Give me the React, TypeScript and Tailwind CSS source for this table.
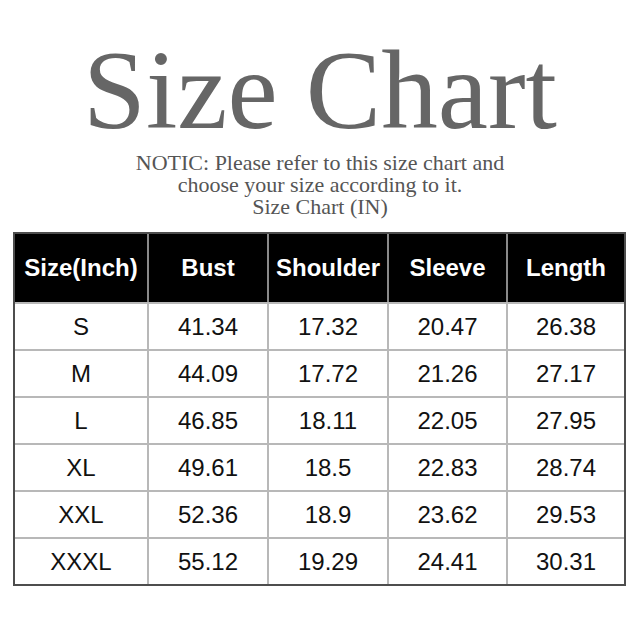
import React from "react";

const headers = ["Size(Inch)", "Bust", "Shoulder", "Sleeve", "Length"];
const rows = [
  ["S", "41.34", "17.32", "20.47", "26.38"],
  ["M", "44.09", "17.72", "21.26", "27.17"],
  ["L", "46.85", "18.11", "22.05", "27.95"],
  ["XL", "49.61", "18.5", "22.83", "28.74"],
  ["XXL", "52.36", "18.9", "23.62", "29.53"],
  ["XXXL", "55.12", "19.29", "24.41", "30.31"],
];

const cols = "grid grid-cols-[132px_120px_120px_119px_118px]";

export default function App() {
  return (
    <div className="w-[640px] h-[640px] bg-white overflow-hidden">
      <div
        className="pt-[33px] text-center text-[113px] leading-[113px] text-[#666666]"
        style={{ fontFamily: '"Liberation Serif", serif' }}
      >
        Size Chart
      </div>
      <div
        className="mt-[6px] text-center text-[22px] leading-[22px] text-[#555555]"
        style={{ fontFamily: '"Liberation Serif", serif' }}
      >
        <div>NOTIC: Please refer to this size chart and</div>
        <div>choose your size according to it.</div>
        <div>Size Chart (IN)</div>
      </div>
      <div
        className="ml-[13px] mt-[14px] w-[613px] border-2 border-[#4d4d4d] bg-white"
        style={{ fontFamily: '"Liberation Sans", Arial, sans-serif' }}
      >
        <div className={`${cols} h-[68px] bg-black`}>
          {headers.map((h, i) => (
            <div
              key={h}
              className={`flex items-center justify-center text-[24px] font-bold text-white ${
                i > 0 ? "border-l-2 border-[#8a8a8a]" : ""
              }`}
            >
              {h}
            </div>
          ))}
        </div>
        {rows.map((r, ri) => (
          <div key={ri} className={`${cols} h-[47px] border-t-2 border-[#b8b8b8]`}>
            {r.map((c, i) => (
              <div
                key={i}
                className={`flex items-center justify-center text-[24px] text-[#111111] ${
                  i > 0 ? "border-l-2 border-[#b8b8b8]" : ""
                }`}
              >
                {c}
              </div>
            ))}
          </div>
        ))}
      </div>
    </div>
  );
}
